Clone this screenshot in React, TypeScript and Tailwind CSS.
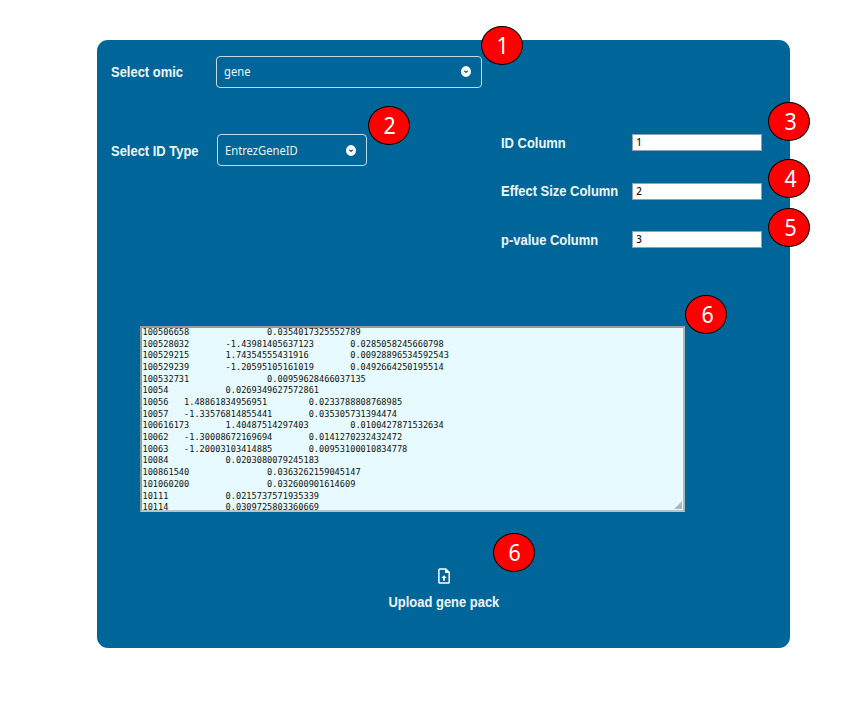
import React from "react";

const geneRows = [
  "100506658\t\t0.0354017325552789",
  "100528032\t-1.43981405637123\t0.0285058245660798",
  "100529215\t1.74354555431916\t0.00928896534592543",
  "100529239\t-1.20595105161019\t0.0492664250195514",
  "100532731\t\t0.00959628466037135",
  "10054\t\t0.0269349627572861",
  "10056\t1.48861834956951\t0.0233788808768985",
  "10057\t-1.33576814855441\t0.035305731394474",
  "100616173\t1.40487514297403\t0.0100427871532634",
  "10062\t-1.30008672169694\t0.0141270232432472",
  "10063\t-1.20003103414885\t0.00953100010834778",
  "10084\t\t0.0203080079245183",
  "100861540\t\t0.0363262159045147",
  "101060200\t\t0.032600901614609",
  "10111\t\t0.0215737571935339",
  "10114\t\t0.0309725803360669",
];

function Label({ children }: { children: string }) {
  return (
    <span className="inline-block origin-left scale-x-[0.925] whitespace-nowrap text-[14px] leading-4 font-bold text-[#edf7fb]">
      {children}
    </span>
  );
}

function Select({ value, className }: { value: string; className: string }) {
  return (
    <button
      className={`flex h-8 items-center justify-between rounded-[4px] border border-[#c3dbe8] pl-[7px] text-[#edf7fb] ${className}`}
    >
      <span className="inline-block origin-left scale-x-[0.89] pt-px font-['Noto_Sans',sans-serif] text-[12.6px] leading-4">
        {value}
      </span>
      <svg viewBox="0 0 10 11" className="h-[11px] w-[10px] shrink-0">
        <ellipse cx="5" cy="5.5" rx="5" ry="5.4" fill="#fff" />
        <path d="M3.3 4.8 5 6.4 6.7 4.8" fill="none" stroke="#006699" strokeWidth="1.2" />
      </svg>
    </button>
  );
}

function ColumnField({ label, value }: { label: string; value: string }) {
  return (
    <label className="flex h-[17px] items-center">
      <span className="w-[131.2px] shrink-0">
        <Label>{label}</Label>
      </span>
      <input
        readOnly
        defaultValue={value}
        className="h-[17px] w-[130px] border border-[#8ba3b3] bg-white pl-[3px] font-['Noto_Sans',sans-serif] text-[9.8px] leading-3 font-medium text-[#111] outline-none"
      />
    </label>
  );
}

function Badge({ n, className }: { n: number; className: string }) {
  return (
    <span
      className={`absolute flex h-[39.2px] w-[42px] items-center justify-center rounded-[50%] border border-black bg-[#ff0000] pl-[2px] font-['Noto_Sans',sans-serif] text-[23px] leading-none text-white ${className}`}
    >
      <span className="scale-x-[0.93]">{n}</span>
    </span>
  );
}

export default function App() {
  return (
    <main className="relative h-[707px] w-[862px] overflow-hidden bg-white pt-[40.4px] pl-[96.7px] font-['Liberation_Sans',Arial,sans-serif]">
      <section className="h-[608px] w-[693.8px] rounded-[11px] bg-[#006699] pt-[15.6px]">
        <div className="flex h-8 items-center pl-[14.3px]">
          <div className="w-[105px]">
            <Label>Select omic</Label>
          </div>
          <Select value="gene" className="w-[266.5px] pr-[10.5px]" />
        </div>

        <div className="mt-[46.5px] flex h-[114px] items-start">
          <div className="flex h-8 w-[404.3px] items-center pl-[14.3px]">
            <div className="w-[106px] pt-px">
              <Label>Select ID Type</Label>
            </div>
            <Select value="EntrezGeneID" className="w-[150.5px] pr-[10.5px]" />
          </div>
          <div className="flex flex-col gap-[31.3px]">
            <ColumnField label="ID Column" value="1" />
            <ColumnField label="Effect Size Column" value="2" />
            <ColumnField label="p-value Column" value="3" />
          </div>
        </div>

        <div className="relative mt-[77.5px] ml-[43.3px] h-[186px] w-[545px] overflow-hidden border-2 border-t-[#9a9a9a] border-r-[#a8b8c0] border-b-[#b9c3c8] border-l-[#9a9a9a] bg-[#e6faff]">
          <pre className="-mt-[0.9px] ml-[0.5px] font-['DejaVu_Sans_Mono',monospace] text-[8.63px] leading-[11.67px] text-[#111] [tab-size:8]">
            {geneRows.join("\n")}
          </pre>
          <svg viewBox="0 0 8 8" className="absolute right-px bottom-px h-2 w-2">
            <path d="M8 0V8H0Z" fill="#a9b8bd" />
          </svg>
        </div>

        <button className="mt-[56px] ml-[291.3px] flex w-[111px] flex-col items-center">
          <svg viewBox="0 0 12 16" className="ml-px h-4 w-3">
            <path d="M2 .9H7.7L11.2 4.4V14.2Q11.2 15.1 10.3 15.1H1.8Q.9 15.1.9 14.2V1.9Q.9.9 2 .9Z" fill="none" stroke="#fff" strokeWidth="1.5" />
            <path d="M7 .6V5H11.5Z" fill="#fff" />
            <path d="M6 7.2 3.2 10H5.1V12.8H6.9V10H8.8Z" fill="#fff" />
          </svg>
          <span className="mt-[10px] inline-block scale-x-[0.925] text-[14px] leading-4 font-bold whitespace-nowrap text-[#edf7fb]">
            Upload gene pack
          </span>
        </button>
      </section>

      <Badge n={1} className="top-[26.3px] left-[481px]" />
      <Badge n={2} className="top-[106px] left-[367.7px]" />
      <Badge n={3} className="top-[102px] left-[768.4px]" />
      <Badge n={4} className="top-[159px] left-[768.4px]" />
      <Badge n={5} className="top-[208px] left-[768.4px]" />
      <Badge n={6} className="top-[295px] left-[685.4px]" />
      <Badge n={6} className="top-[533px] left-[492.6px]" />
    </main>
  );
}
